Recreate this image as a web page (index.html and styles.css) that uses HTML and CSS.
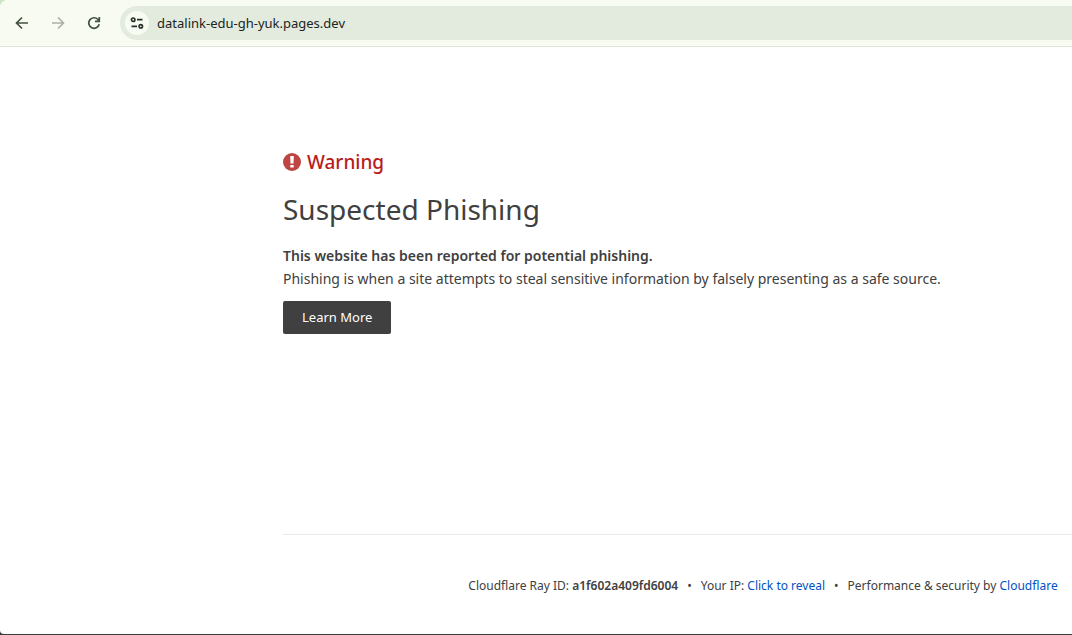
FILE: index.html
```html
<!DOCTYPE html>
<html lang="en">
<head>
<meta charset="utf-8">
<title>Suspected phishing site</title>
<link rel="stylesheet" href="styles.css">
</head>
<body>
<div class="window">
  <header class="toolbar">
    <button class="nav" type="button" aria-label="Back">
      <svg width="16" height="16" viewBox="0 0 16 16"><path d="M14 8H3M8 2.5 2.5 8 8 13.5"/></svg>
    </button>
    <button class="nav nav-off" type="button" aria-label="Forward" disabled>
      <svg width="16" height="16" viewBox="0 0 16 16"><path d="M2 8h11M8 2.500 13.500 8 8 13.500"/></svg>
    </button>
    <button class="nav" type="button" aria-label="Reload">
      <svg width="16" height="16" viewBox="0 0 16 16"><path d="M13.200 9.300A5.300 5.300 0 1 1 12 4.500L13.300 6M13.300 2v4.300H9"/></svg>
    </button>
    <div class="address">
      <button class="site-info" type="button" aria-label="View site information">
        <svg width="14" height="14" viewBox="0 0 14 14"><circle cx="3.200" cy="3.700" r="1.700"/><path d="M7 3.700h5.500M1.500 10.300H7"/><circle cx="10.800" cy="10.300" r="1.700"/></svg>
      </button>
      <input class="url" type="text" aria-label="Address" value="datalink-edu-gh-yuk.pages.dev">
    </div>
  </header>
  <div class="page">
    <main class="notice">
      <p class="warning">
        <svg width="18" height="18" viewBox="0 0 18 18" aria-hidden="true"><circle cx="9" cy="9" r="9" fill="#bd4542"/><path d="M7.200 3h3.600l-.3 7.500h-3zM7.300 12h3.400v2.500H7.300z" fill="#fff"/></svg>
        Warning
      </p>
      <h1 class="title">Suspected Phishing</h1>
      <p class="text"><strong>This website has been reported for potential phishing.</strong><br>Phishing is when a site attempts to steal sensitive information by falsely presenting as a safe source.</p>
      <button class="learn" type="button">Learn More</button>
    </main>
    <footer class="footer">
      <span>Cloudflare Ray ID: <strong>a1f602a409fd6004</strong></span>
      <span>•</span>
      <span>Your IP: <button class="reveal" type="button">Click to reveal</button></span>
      <span>•</span>
      <span>Performance &amp; security by <a href="#cloudflare">Cloudflare</a></span>
    </footer>
  </div>
</div>
</body>
</html>
```
FILE: styles.css
```css
* { box-sizing: border-box; }
body {
  margin: 0;
  background: linear-gradient(#cfe3c8 50%, #3b3b3d 50%);
  color: #404040;
  font-family: "Noto Sans", "Open Sans", sans-serif;
  min-height: 100vh;
  overflow: hidden;
}
button, input { font: inherit; color: inherit; border: 0; padding: 0; background: none; }
strong { font-weight: 600; }
.window {
  display: flex;
  flex-direction: column;
  min-height: calc(100vh - 1px);
  background: #fff;
  border-radius: 8px 0 0 4px;
  overflow: hidden;
}
.toolbar {
  display: flex;
  align-items: center;
  gap: 8px;
  height: 47px;
  padding-left: 8px;
  background: #f8fbf2;
  border-bottom: 1px solid #dfe4da;
}
.nav { display: grid; place-items: center; width: 28px; height: 28px; }
.nav svg, .site-info svg { fill: none; stroke: #42523f; stroke-width: 1.7; }
.nav-off svg { stroke: #acb2a8; }
.site-info svg { stroke: #27312a; }
.address {
  display: flex;
  flex: 1;
  align-items: center;
  gap: 8px;
  height: 34px;
  margin-left: 4px;
  padding-left: 5px;
  border-radius: 17px 0 0 17px;
  background: #e3ebdf;
}
.site-info { display: grid; place-items: center; width: 24px; height: 24px; border-radius: 50%; background: #f8fbf2; }
.url { flex: 1; min-width: 0; font-size: 13px; color: #202420; outline: 0; }
.page {
  display: flex;
  flex: 1;
  flex-direction: column;
  width: 960px;
  margin-left: 283px;
}
.notice { flex: 1; padding-top: 100px; }
.warning {
  display: flex;
  align-items: center;
  gap: 6px;
  margin: 0;
  color: #b91c1c;
  font-size: 19px;
  font-weight: 500;
  line-height: 30px;
}
.title { margin: 10px 0 13px; font-size: 28px; font-weight: 400; line-height: 44px; }
.text { margin: 0 0 11px; font-size: 14px; line-height: 23px; }
.learn { height: 33px; padding: 0 19px 2px; border-radius: 2px; background: #404040; color: #fff; font-size: 13px; }
.footer {
  display: flex;
  justify-content: center;
  gap: 9px;
  padding: 40px 0 38px;
  border-top: 1px solid #ebebeb;
  font-size: 12px;
  line-height: 21px;
}
.footer a, .reveal { color: #0051c3; text-decoration: none; }
```
